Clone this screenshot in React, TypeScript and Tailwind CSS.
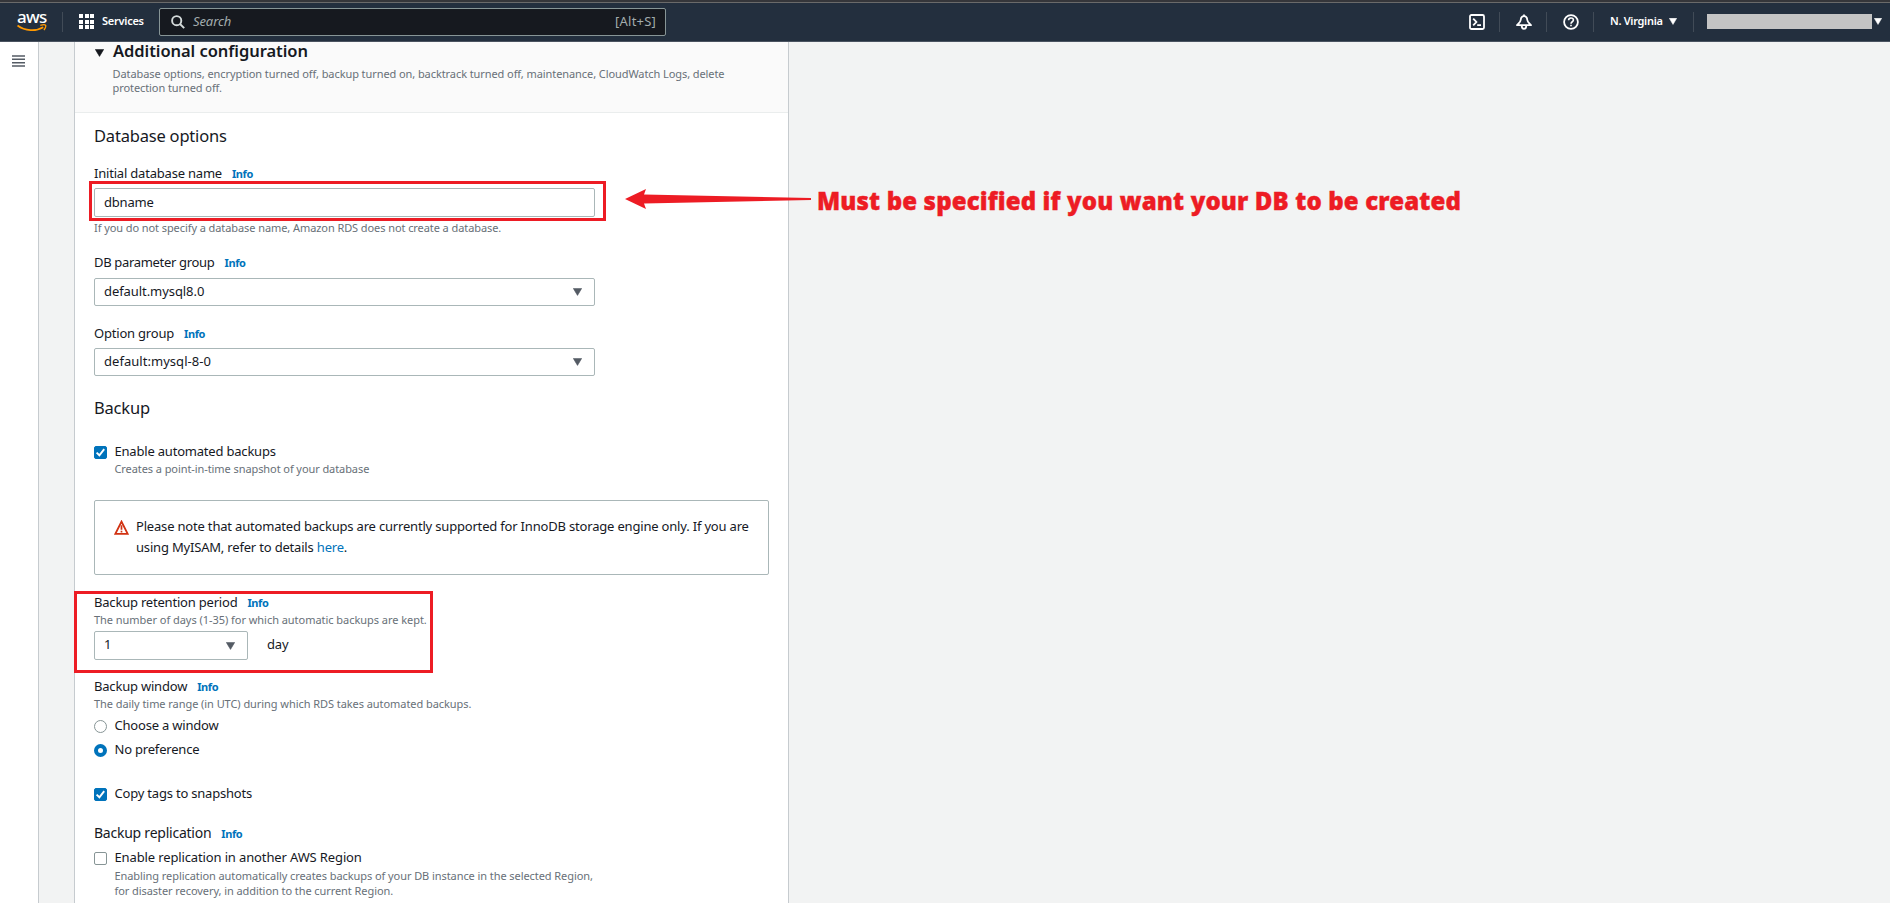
import type { ReactNode } from "react";

function Caret({ className = "h-[8px] w-[9px]" }: { className?: string }) {
  return (
    <svg viewBox="0 0 9 8" className={`shrink-0 ${className}`} fill="currentColor">
      <path d="M0.3 0.4H8.7L4.5 7.4Z" stroke="currentColor" strokeWidth="0.6" strokeLinejoin="round" />
    </svg>
  );
}

function Label({ className = "", text = "text-[13px]", children }: { className?: string; text?: string; children: ReactNode }) {
  return (
    <div className={`flex h-5 items-baseline gap-2.5 whitespace-nowrap ${className}`}>
      <span className={`leading-5 ${text}`}>{children}</span>
      <a className="text-[11px] font-bold leading-4 tracking-[-0.4px] text-[#0073bb]">Info</a>
    </div>
  );
}

function Help({ className = "", tracking = "tracking-[-0.08px]", children }: { className?: string; tracking?: string; children: ReactNode }) {
  return <p className={`whitespace-nowrap text-[11px] leading-[14px] text-[#687078] ${tracking} ${className}`}>{children}</p>;
}

function Select({ className = "", children }: { className?: string; children: ReactNode }) {
  return (
    <div className={`flex items-center justify-between rounded-[2px] border border-[#aab7b8] bg-white pb-[3px] pl-[9px] pr-3 text-[13px] leading-5 ${className}`}>
      {children}
      <Caret className="mt-[3px] h-[8px] w-[9px] text-[#545b64]" />
    </div>
  );
}

function Check({ on = false }: { on?: boolean }) {
  return (
    <span className={`mt-[5px] flex size-[13px] shrink-0 items-center justify-center rounded-[2px] border ${on ? "border-[#0073bb] bg-[#0073bb]" : "border-[#879596] bg-white"}`}>
      {on && (
        <svg viewBox="0 0 11 11" className="size-[11px]" fill="none" stroke="white" strokeWidth="1.9">
          <path d="M1.6 5.6L4.4 8.3L9.2 2.2" />
        </svg>
      )}
    </span>
  );
}

function Radio({ on = false }: { on?: boolean }) {
  return <span className={`mt-[5px] size-[13px] shrink-0 rounded-full bg-white ${on ? "border-4 border-[#0073bb]" : "border border-[#879596]"}`} />;
}

function Option({ className = "", control, children }: { className?: string; control: ReactNode; children: ReactNode }) {
  return (
    <div className={`flex h-5 gap-[7.5px] whitespace-nowrap text-[13px] leading-5 ${className}`}>
      {control}
      {children}
    </div>
  );
}

function Divider({ className = "" }: { className?: string }) {
  return <span className={`h-5 w-px shrink-0 bg-[#414b57] ${className}`} />;
}

function TopBar() {
  return (
    <header className="flex h-[42px] shrink-0 flex-col bg-[#232f3e]">
      <div className="h-[3px] shrink-0 border-b border-[#6a6a6a] bg-[#35363a]" />
      <div className="flex flex-1 items-center border-b border-[#4a5360] pb-px text-white">
        <div className="ml-[17px] flex w-[30px] flex-col">
          <span className="h-[13px] text-[17px] font-medium leading-[9px] tracking-[-0.7px]">aws</span>
          <svg viewBox="0 0 30 8" className="-mt-px h-[8px] w-[30px]" fill="none" stroke="#f90">
            <path d="M0.5 1.5C8 7.2 19 7.6 26.2 3.2" strokeWidth="1.8" />
            <path d="M23.3 1.4C25.6 0.7 28.2 0.6 28.6 1.3C29 2 28.2 4.3 27 6" strokeWidth="1.4" />
          </svg>
        </div>
        <Divider className="ml-[15px]" />
        <div className="ml-4 grid grid-cols-3 gap-[1.5px]">
          {Array.from({ length: 9 }, (_, i) => (
            <span key={i} className="size-[4px] bg-white" />
          ))}
        </div>
        <span className="-mt-px ml-[8px] w-[42px] text-[11px] font-semibold leading-5 tracking-[-0.25px]">Services</span>
        <div className="ml-[15px] flex h-[28px] w-[507px] items-center rounded-[2px] border border-[#879596] bg-[#16191f] pl-[11px] pr-[9px] text-[13px] text-[#a2acad]">
          <svg viewBox="0 0 14 14" className="size-[14px]" fill="none" stroke="#d5dbdb" strokeWidth="1.9">
            <circle cx="5.7" cy="5.7" r="4.6" />
            <path d="M9 9L13.2 13.2" />
          </svg>
          <span className="ml-[8px] italic tracking-[-0.1px]">Search</span>
          <span className="ml-auto tracking-[0.2px]">[Alt+S]</span>
        </div>
        <div className="ml-auto flex items-center">
          <svg viewBox="0 0 16 16" className="size-[16px]" fill="none" stroke="white" strokeWidth="1.8">
            <rect x="1" y="1" width="14" height="14" rx="1.5" />
            <path d="M4.2 4.6L7.4 8L4.2 11.4M8.2 11.2H12" />
          </svg>
          <Divider className="ml-[14px]" />
          <svg viewBox="0 0 16 16" className="ml-4 size-[16px]" fill="none" stroke="white" strokeWidth="1.8" strokeLinejoin="round">
            <path d="M8 2.2C5.6 2.2 4.9 3.8 4.7 6C4.5 8.3 2.8 9.3 1 11.2H15C13.2 9.3 11.5 8.3 11.3 6C11.1 3.8 10.4 2.2 8 2.2ZM8 2.2V0.4M5.7 11.4C5.7 15.9 10.3 15.9 10.3 11.4" />
          </svg>
          <Divider className="ml-[14px]" />
          <svg viewBox="0 0 16 16" className="ml-4 size-[16px]" fill="none" stroke="white" strokeWidth="1.8">
            <circle cx="8" cy="8" r="6.9" />
            <path d="M5.6 6.3C5.6 3.2 10.4 3.2 10.4 6.1C10.4 7.8 8 7.7 8 9.7M8 10.7V12.3" strokeWidth="1.6" />
          </svg>
          <Divider className="ml-[14px]" />
          <span className="-mt-px ml-4 w-[53px] whitespace-nowrap text-[11px] font-semibold leading-5 tracking-[-0.3px]">N. Virginia</span>
          <Caret className="ml-[6px] h-[7px] w-[8px]" />
          <Divider className="ml-[16px]" />
          <span className="ml-[13px] h-[15px] w-[165px] bg-[#c4c4c4]" />
          <Caret className="ml-[2px] mr-[8px] h-[7px] w-[8px]" />
        </div>
      </div>
    </header>
  );
}

function ConfigPanel() {
  return (
    <section className="flex w-[715px] flex-col border-x border-[#c6cbcf] bg-white text-[#16191f]">
      <div className="h-[71px] shrink-0 border-b border-[#eaeded] bg-[#fafafa] pl-5">
        <h2 className="flex items-center gap-[9px] text-[16.5px] font-semibold leading-[18px] tracking-[-0.06px]">
          <Caret className="mt-[3px] h-[8px] w-[9px]" />
          Additional configuration
        </h2>
        <Help className="ml-[17.5px] mt-[7px]">
          Database options, encryption turned off, backup turned on, backtrack turned off, maintenance, CloudWatch Logs, delete
          <br />
          protection turned off.
        </Help>
      </div>
      <div className="flex flex-col pl-[19px] tracking-[-0.2px]">
        <h3 className="mt-[13px] text-[16.5px] leading-5">Database options</h3>

        <Label className="mt-[17px]">Initial database name</Label>
        <div className="relative mt-[5px] h-[29px] w-[501px] rounded-[2px] border border-[#aab7b8] bg-white pl-[9px] text-[13px] leading-[27px]">
          dbname
          <div className="absolute -left-[6px] -top-[8px] h-[40px] w-[517px] border-[3px] border-[#ed1c24]" />
          <svg viewBox="0 0 186 20" className="absolute left-[530px] top-0 h-[20px] w-[186px]" fill="#ed1c24">
            <path d="M0 10L21 0L19 5.5L186 9V11L19 14.5L21 20Z" />
          </svg>
          <p className="absolute -top-[2px] left-[722px] whitespace-nowrap text-[24px] font-black leading-[28px] tracking-[0.14px] text-[#ed1c24] [-webkit-text-stroke:0.4px_#ed1c24]">
            Must be specified if you want your DB to be created
          </p>
        </div>
        <Help className="mt-1">If you do not specify a database name, Amazon RDS does not create a database.</Help>

        <Label className="mt-[17px]" text="text-[13px] tracking-[-0.32px]">DB parameter group</Label>
        <Select className="mt-[6px] h-[28px] w-[501px] tracking-[-0.07px]">default.mysql8.0</Select>

        <Label className="mt-[17px]">Option group</Label>
        <Select className="mt-[5px] h-[28px] w-[501px] tracking-[0.04px]">default:mysql-8-0</Select>

        <h3 className="mt-[22px] text-[16.5px] leading-5">Backup</h3>

        <Option className="mt-[23px]" control={<Check on />}>Enable automated backups</Option>
        <Help className="ml-[20.5px] mt-px">Creates a point-in-time snapshot of your database</Help>

        <div className="mt-6 flex h-[75px] w-[675px] gap-[7px] rounded-[2px] border border-[#aab7b8] pl-[19px] pt-[15px] text-[13px] leading-[21px] tracking-[-0.185px]">
          <svg viewBox="0 0 16 16" className="mt-[4px] size-[15px] shrink-0" fill="none" stroke="#d13212" strokeWidth="2">
            <path d="M8 1.8L14.6 14.8H1.4Z" />
            <path d="M8 5.5V10.4M8 11.4V13.3" strokeWidth="1.8" />
          </svg>
          <p className="whitespace-nowrap">
            Please note that automated backups are currently supported for InnoDB storage engine only. If you are
            <br />
            using MyISAM, refer to details <a className="text-[#0073bb]">here</a>.
          </p>
        </div>

        <div className="relative flex flex-col">
          <Label className="mt-[17px]">Backup retention period</Label>
          <Help className="mt-px" tracking="tracking-[-0.04px]">The number of days (1-35) for which automatic backups are kept.</Help>
          <div className="mt-1 flex h-[29px] gap-[19px] text-[13px] leading-[27px]">
            <Select className="w-[154px]">1</Select>
            day
          </div>
          <div className="absolute -left-[20px] top-[16px] h-[82px] w-[359px] border-[3px] border-[#ed1c24]" />
        </div>

        <Label className="mt-4">Backup window</Label>
        <Help className="mt-px" tracking="tracking-[-0.06px]">The daily time range (in UTC) during which RDS takes automated backups.</Help>
        <Option className="mt-1" control={<Radio />}>Choose a window</Option>
        <Option className="mt-1" control={<Radio on />}>No preference</Option>

        <Option className="mt-6" control={<Check on />}>Copy tags to snapshots</Option>

        <Label className="mt-5" text="text-[14px] tracking-[-0.24px]">Backup replication</Label>
        <Option className="mt-1 tracking-[-0.13px]" control={<Check />}>Enable replication in another AWS Region</Option>
        <Help className="ml-[20.5px] mt-px leading-[15px]" tracking="tracking-[-0.07px]">
          Enabling replication automatically creates backups of your DB instance in the selected Region,
          <br />
          for disaster recovery, in addition to the current Region.
        </Help>
      </div>
    </section>
  );
}

export default function App() {
  return (
    <div className="flex h-[903px] w-[1890px] flex-col overflow-hidden bg-[#f2f3f3] font-['Noto_Sans',sans-serif]">
      <TopBar />
      <div className="flex min-h-0 flex-1">
        <nav className="w-[39px] shrink-0 border-r border-[#c6cbcf] bg-white pl-3 pt-[13px]">
          <svg viewBox="0 0 13 12" className="h-[12px] w-[13px]" stroke="#545b64" strokeWidth="1.5">
            <path d="M0 0.9H13M0 4.3H13M0 7.7H13M0 11.1H13" />
          </svg>
        </nav>
        <main className="ml-[35px] flex">
          <ConfigPanel />
        </main>
      </div>
    </div>
  );
}
